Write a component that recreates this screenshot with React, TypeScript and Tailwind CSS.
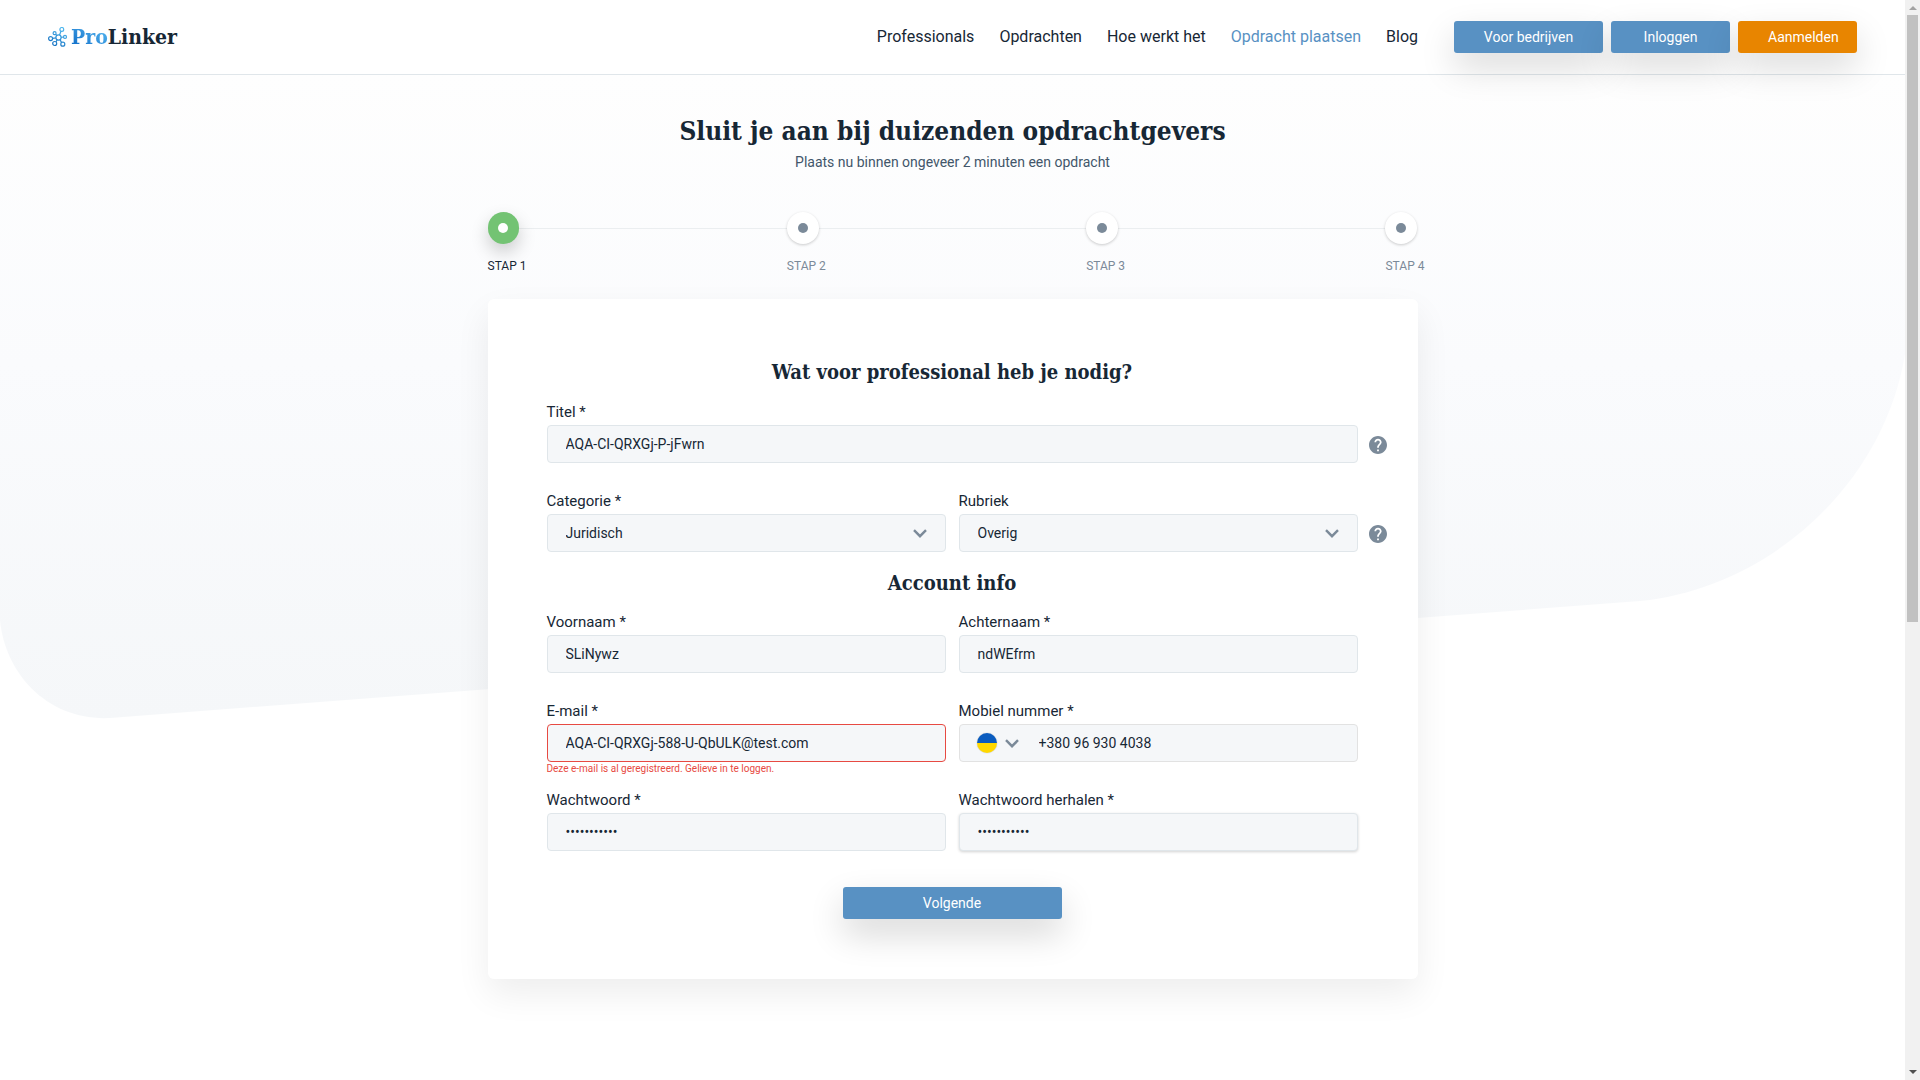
import { ReactNode } from "react";

const slab = "font-['Roboto_Slab','DejaVu_Serif_Condensed','DejaVu_Serif',serif]";
const field =
  "h-[38px] w-full rounded border bg-[#f5f7f9] px-[18px] text-sm text-[#172735] outline-none";

function Logo() {
  return (
    <a href="#" aria-label="ProLinker" className="flex items-center gap-[3px]">
      <svg viewBox="0 0 20 20" className="h-5 w-5" fill="none" strokeWidth="1.2" aria-hidden="true">
        <defs>
          <linearGradient id="mark" x1="0" y1="20" x2="12" y2="0" gradientUnits="userSpaceOnUse">
            <stop offset="0" stopColor="#0b63b8" />
            <stop offset="1" stopColor="#4fb7ee" />
          </linearGradient>
        </defs>
        <g stroke="url(#mark)">
          <circle cx="10.5" cy="10.5" r="2.6" />
          <circle cx="13.8" cy="2.4" r="1.9" />
          <circle cx="6.6" cy="6.2" r="1.5" />
          <circle cx="2.6" cy="11.6" r="2" />
          <circle cx="6.7" cy="16.5" r="2" />
          <circle cx="14.8" cy="17.2" r="2" />
          <circle cx="17" cy="9.9" r="1.5" />
          <path d="M11.5 8 13 4.2M7.7 7.3l1.1 1.2M4.6 11.3l3.3-.5M8 14.9l1.1-2.2M12 12.6l1.6 3M13.1 10.3l2.4-.3" />
        </g>
      </svg>
      <span className={`${slab} text-[21px] leading-7 font-bold text-[#172735]`}>
        <span className="bg-linear-to-tr from-[#0467c4] to-[#5cc0f5] bg-clip-text text-transparent">Pro</span>
        <span>Linker</span>
      </span>
    </a>
  );
}

const links = ["Professionals", "Opdrachten", "Hoe werkt het", "Opdracht plaatsen", "Blog"];

function Header() {
  return (
    <header className="relative flex h-[75px] items-center justify-between border-b border-[#e0e6ea] bg-white px-12">
      <Logo />
      <div className="flex items-center gap-9">
        <nav className="flex gap-[25px] text-base">
          {links.map((l) => (
            <a key={l} href="#" className={l === "Opdracht plaatsen" ? "text-[#5891c3]" : "text-[#172735]"}>
              {l}
            </a>
          ))}
        </nav>
        <div className="flex gap-2 text-sm text-white">
          <button className="h-8 w-[149px] rounded-[3px] bg-[#5891c3] whitespace-nowrap shadow-[0_15px_35px_rgba(0,0,0,0.15)]">
            Voor bedrijven
          </button>
          <button className="h-8 w-[119px] rounded-[3px] bg-[#5891c3] whitespace-nowrap shadow-[0_15px_35px_rgba(0,0,0,0.15)]">
            Inloggen
          </button>
          <button className="h-8 w-[119px] rounded-[3px] bg-[#e88500] pl-[30px] text-left whitespace-nowrap shadow-[0_15px_35px_rgba(0,0,0,0.15)]">
            Aanmelden
          </button>
        </div>
      </div>
    </header>
  );
}

function Steps() {
  return (
    <div className="relative mt-[39px]">
      <div className="absolute inset-x-4 top-4 h-px bg-[#ebeef0]" />
      <ol className="relative flex justify-between">
        {[1, 2, 3, 4].map((n) => (
          <li key={n} className="w-8">
            <div
              className={
                n === 1
                  ? "flex h-8 w-[31px] items-center justify-center rounded-full bg-[#73c373] shadow-[0_8px_18px_rgba(0,0,0,0.2)]"
                  : "flex h-8 w-8 items-center justify-center rounded-full bg-white shadow-[0_1px_3px_rgba(0,0,0,0.2)]"
              }
            >
              <span className={n === 1 ? "h-2.5 w-2.5 rounded-full bg-white" : "h-2.5 w-2.5 rounded-full bg-[#7b8a99]"} />
            </div>
            <p
              className={
                n === 1
                  ? "mt-3 text-xs leading-5 whitespace-nowrap text-[#172735]"
                  : "mt-3 text-xs leading-5 whitespace-nowrap text-[#7b8a99]"
              }
            >
              STAP {n}
            </p>
          </li>
        ))}
      </ol>
    </div>
  );
}

function Field({ id, label, children }: { id: string; label: string; children: ReactNode }) {
  return (
    <div className="relative min-w-0">
      <label htmlFor={id} className="block h-6 text-[15px] leading-[22px] text-[#172735]">
        {label}
      </label>
      {children}
    </div>
  );
}

function Chevron({ className }: { className: string }) {
  return (
    <svg viewBox="0 0 14 9" className={className} fill="none" stroke="#7b8a99" strokeWidth="2.4" aria-hidden="true">
      <path d="m1 1.2 6 6 6-6" />
    </svg>
  );
}

function Select({ id, value }: { id: string; value: string }) {
  return (
    <div className="relative">
      <select id={id} defaultValue={value} className={`${field} appearance-none border-[#e0e6ea]`}>
        <option>{value}</option>
      </select>
      <Chevron className="pointer-events-none absolute top-[15px] right-[19px] h-[9px] w-[14px]" />
    </div>
  );
}

function Help() {
  return (
    <button type="button" aria-label="Hulp" className="absolute right-[-29px] bottom-[9px] h-[18px] w-[18px]">
      <svg viewBox="2 2 20 20" className="h-[18px] w-[18px]" fill="#7b8a99" aria-hidden="true">
        <path d="M12 2C6.48 2 2 6.48 2 12s4.480 10 10 10 10-4.480 10-10S17.520 2 12 2zm1 17h-2v-2h2v2zm2.070-7.750-.9.920C13.450 12.900 13 13.500 13 15h-2v-.5c0-1.100.45-2.100 1.170-2.830l1.240-1.260c.37-.36.59-.86.59-1.410 0-1.100-.9-2-2-2s-2 .9-2 2H8c0-2.210 1.790-4 4-4s4 1.790 4 4c0 .88-.36 1.680-.93 2.250z" />
      </svg>
    </button>
  );
}

function Form() {
  return (
    <form className="mt-[23px] rounded-md bg-white pt-[57px] pr-[60px] pb-[60px] pl-[59px] shadow-[0_15px_35px_rgba(0,0,0,0.07)]">
      <h2 className={`${slab} text-center text-xl leading-8 font-bold text-[#172735]`}>
        Wat voor professional heb je nodig?
      </h2>
      <div className="mt-[13px] grid grid-cols-2 gap-x-[13px] gap-y-[27px]">
        <div className="relative col-span-2">
          <Field id="titel" label="Titel *">
            <input id="titel" defaultValue="AQA-CI-QRXGj-P-jFwrn" className={`${field} border-[#e0e6ea]`} />
          </Field>
          <Help />
        </div>
        <Field id="categorie" label="Categorie *">
          <Select id="categorie" value="Juridisch" />
        </Field>
        <div className="relative">
          <Field id="rubriek" label="Rubriek">
            <Select id="rubriek" value="Overig" />
          </Field>
          <Help />
        </div>
      </div>
      <h2 className={`${slab} mt-[15px] text-center text-xl leading-8 font-bold text-[#172735]`}>Account info</h2>
      <div className="mt-3 grid grid-cols-2 gap-x-[13px] gap-y-[27px]">
        <Field id="voornaam" label="Voornaam *">
          <input id="voornaam" defaultValue="SLiNywz" className={`${field} border-[#e0e6ea]`} />
        </Field>
        <Field id="achternaam" label="Achternaam *">
          <input id="achternaam" defaultValue="ndWEfrm" className={`${field} border-[#e0e6ea]`} />
        </Field>
        <Field id="email" label="E-mail *">
          <input
            id="email"
            type="email"
            defaultValue="AQA-CI-QRXGj-588-U-QbULK@test.com"
            aria-describedby="email-error"
            className={`${field} border-[#e74a42]`}
          />
          <p id="email-error" className="absolute top-full left-0 text-[10px] leading-[14px] text-[#e74a42]">
            Deze e-mail is al geregistreerd. Gelieve in te loggen.
          </p>
        </Field>
        <Field id="mobiel" label="Mobiel nummer *">
          <div className="flex h-[38px] items-center rounded border border-[#e2e2e2] bg-[#f5f7f9] pl-[17px]">
            <button type="button" aria-label="Land" className="flex items-center gap-2">
              <span className="h-5 w-5 rounded-full bg-linear-to-b from-[#0a5cbf] from-50% to-[#ffd800] to-50% shadow-[0_0_1px_rgba(0,0,0,0.4)]" />
              <Chevron className="h-[9px] w-[14px]" />
            </button>
            <input
              id="mobiel"
              type="tel"
              defaultValue="+380 96 930 4038"
              className="ml-5 min-w-0 flex-1 bg-transparent text-sm text-[#172735] outline-none"
            />
          </div>
        </Field>
        <Field id="wachtwoord" label="Wachtwoord *">
          <input id="wachtwoord" type="password" defaultValue="abcdefghijk" className={`${field} border-[#e0e6ea]`} />
        </Field>
        <Field id="herhalen" label="Wachtwoord herhalen *">
          <input
            id="herhalen"
            type="password"
            defaultValue="abcdefghijk"
            className={`${field} border-[#e0e6ea] shadow-[0_1px_3px_rgba(0,0,0,0.18)]`}
          />
        </Field>
      </div>
      <button
        type="button"
        className="mx-auto mt-9 block h-8 w-[219px] rounded-[3px] bg-[#5891c3] text-sm text-white shadow-[0_15px_35px_rgba(0,0,0,0.16)]"
      >
        Volgende
      </button>
    </form>
  );
}

function Scrollbar() {
  return (
    <div
      aria-hidden="true"
      className="sticky top-0 flex h-screen w-[15px] shrink-0 flex-col items-center justify-between bg-[#f1f1f1] pt-1.5 pb-1.5"
    >
      <svg viewBox="0 0 8 4" className="h-1 w-2" fill="#a3a3a3">
        <path d="M0 4 4 0l4 4z" />
      </svg>
      <div className="mt-[5px] h-[607px] w-[11px] bg-[#c1c1c1]" />
      <div className="flex-1" />
      <svg viewBox="0 0 8 4" className="h-1 w-2" fill="#505050">
        <path d="m0 0 4 4 4-4z" />
      </svg>
    </div>
  );
}

export default function App() {
  return (
    <div className="flex min-h-screen bg-white font-[Roboto,sans-serif]">
      <div className="relative isolate min-w-0 flex-1">
        <svg
          viewBox="0 0 1905 645"
          preserveAspectRatio="none"
          className="absolute inset-x-0 top-[74px] -z-10 h-[645px] w-full"
          aria-hidden="true"
        >
          <defs>
            <linearGradient id="backdrop" x1="0" y1="0" x2="0" y2="1">
              <stop offset="0" stopColor="#fefefe" />
              <stop offset="0.45" stopColor="#fafbfd" />
              <stop offset="1" stopColor="#f5f7f9" />
            </linearGradient>
          </defs>
          <path
            d="M0 0H1905V280C1885 405 1775 513 1640 527L110 644C48 647 5 600 0 546Z"
            fill="url(#backdrop)"
          />
        </svg>
        <Header />
        <main className="mx-auto w-full max-w-[930px] pt-9 pb-16">
          <h1 className={`${slab} text-center text-[26px] leading-10 font-bold text-[#172735]`}>
            Sluit je aan bij duizenden opdrachtgevers
          </h1>
          <p className="text-center text-sm leading-[22px] text-[#42566a]">
            Plaats nu binnen ongeveer 2 minuten een opdracht
          </p>
          <Steps />
          <Form />
        </main>
      </div>
      <Scrollbar />
    </div>
  );
}
